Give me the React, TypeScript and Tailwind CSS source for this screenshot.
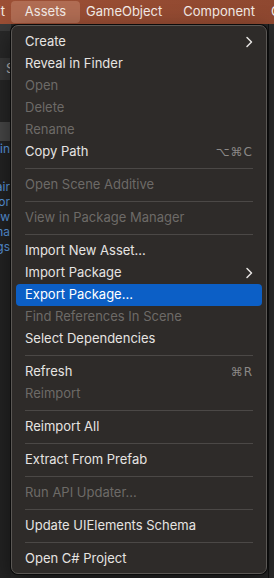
import React from 'react';

type Item =
  | { sep: true }
  | { label: string; disabled?: boolean; shortcut?: string; submenu?: boolean; active?: boolean; sep?: false };

const items: Item[] = [
  { label: 'Create', submenu: true },
  { label: 'Reveal in Finder' },
  { label: 'Open', disabled: true },
  { label: 'Delete', disabled: true },
  { label: 'Rename', disabled: true },
  { label: 'Copy Path', shortcut: '⌥⌘C' },
  { sep: true },
  { label: 'Open Scene Additive', disabled: true },
  { sep: true },
  { label: 'View in Package Manager', disabled: true },
  { sep: true },
  { label: 'Import New Asset...' },
  { label: 'Import Package', submenu: true },
  { label: 'Export Package...', active: true },
  { label: 'Find References In Scene', disabled: true },
  { label: 'Select Dependencies' },
  { sep: true },
  { label: 'Refresh', shortcut: '⌘R' },
  { label: 'Reimport', disabled: true },
  { sep: true },
  { label: 'Reimport All' },
  { sep: true },
  { label: 'Extract From Prefab' },
  { sep: true },
  { label: 'Run API Updater...', disabled: true },
  { sep: true },
  { label: 'Update UIElements Schema' },
  { sep: true },
  { label: 'Open C# Project' },
];

const Chevron = () => (
  <svg width="8" height="12" viewBox="0 0 8 12" fill="none">
    <path d="M2 1.5 L6.5 6 L2 10.5" stroke="#e6e4e2" strokeWidth="1.5" strokeLinecap="round" strokeLinejoin="round" />
  </svg>
);

const App = () => {
  return (
    <div
      className="relative w-[274px] h-[578px] overflow-hidden bg-[#232323] text-[13px]"
      style={{ fontFamily: 'Inter, "Noto Sans", sans-serif' }}
    >
      {/* top menu bar */}
      <div className="h-[24px] flex items-center overflow-hidden bg-gradient-to-r from-[#9c4f35] to-[#8f4830] text-[#f4ece8] whitespace-nowrap">
        <div className="w-[11px] shrink-0 overflow-hidden flex justify-end pr-[6px]">
          <span>Edit</span>
        </div>
        <span className="h-[22px] w-[69px] shrink-0 flex items-center justify-center rounded-[4px] bg-[#b06c53]">Assets</span>
        <span className="ml-[6px] shrink-0">GameObject</span>
        <span className="ml-[21px] shrink-0">Component</span>
        <span className="ml-[16px] shrink-0">C</span>
      </div>

      {/* editor behind the menu */}
      <div className="flex h-[554px]">
        <div className="w-[11px] shrink-0 flex flex-col overflow-hidden whitespace-nowrap">
          <div className="h-[7px] bg-[#3a3a3a]" />
          <div className="h-[27px] bg-[#282828]" />
          <div className="h-[22px] bg-[#383838] flex items-center pl-[6px] text-[#b8b8b8]">S</div>
          <div className="h-[42px] bg-[#262626]" />
          <div className="h-[19px] bg-[#474747]" />
          <div className="flex flex-col items-end pr-[1px] text-[#5b9be0] text-[12px] leading-[15px]">
            <span>Main</span>
            <span className="mt-[23px]">Chair</span>
            <span>Color</span>
            <span>New</span>
            <span>Schema</span>
            <span>Settings</span>
          </div>
        </div>
        <div className="w-[257px] shrink-0 bg-[#262626]" />
        <div className="flex-1 bg-[#2c2c2c] border-l border-[#111]" />
      </div>

      {/* Assets dropdown */}
      <div className="absolute left-[11px] top-[25px] w-[256px] h-[549px] rounded-[7px] border border-[#5a5754] bg-[#2e2b29] shadow-[0_0_0_1px_#0b0b0b,0_8px_24px_rgba(0,0,0,0.5)] px-[4px] pt-[5px]">
        {items.map((it, i) =>
          it.sep ? (
            <div key={i} className="h-[11px] flex items-center px-[9px]">
              <div className="h-px w-full bg-[#4b4846]" />
            </div>
          ) : (
            <div
              key={i}
              className={`h-[22px] flex items-center justify-between pl-[9px] pr-[9px] rounded-[4px] ${
                it.active ? 'bg-[#0c5fc6] text-white' : it.disabled ? 'text-[#6d6a67]' : 'text-[#e6e4e2]'
              }`}
            >
              <span>{it.label}</span>
              {it.submenu && <Chevron />}
              {it.shortcut && (
                <span
                  className="text-[#8b8886] tracking-[1px]"
                  style={{ fontFamily: '"DejaVu Sans", Inter, sans-serif', fontSize: '12px' }}
                >
                  {it.shortcut}
                </span>
              )}
            </div>
          )
        )}
      </div>
    </div>
  );
};

export default App;
